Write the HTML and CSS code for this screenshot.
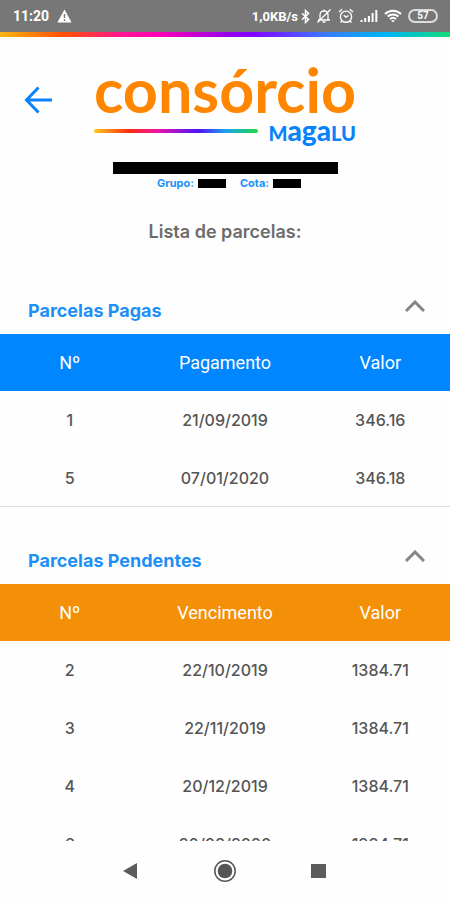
FILE: index.html
```
<!DOCTYPE html>
<html lang="pt-br">

<head>
    <title>Consórcio Magalu</title>
    <meta charset="utf-8" />
    <meta name="viewport" content="width=device-width, initial-scale=1" />
    <link rel="stylesheet" href="styles.css">
</head>
<body>

    <div id="statusBar">
        <span>11:20</span>
        <svg class="warnIcon" width="15" height="14" viewBox="0 0 15 14">
            <path d="M7.5 0.5L14.6 13.5H0.4Z" fill="#fff" />
            <path d="M7.5 5V9M7.5 10.3V12" stroke="#777" stroke-width="1.5" />
        </svg>
        <span class="netSpeed">1,0KB/s</span>
        <svg width="9" height="15" viewBox="0 0 9 15" fill="none" stroke="#fff" stroke-width="1.5">
            <path d="M1 4.2L7.6 10.6L4.5 13.5V1.5L7.6 4.4L1 10.8" />
        </svg>
        <svg class="statusIcon" width="16" height="16" viewBox="0 0 16 16" fill="none" stroke="#fff" stroke-width="1.3">
            <path d="M2 12H14M4 11.5V7C4 4.5 5.6 3 8 3S12 4.5 12 7V11.5M6.5 14H9.5M8 3V1.5M1.5 14.5L14.5 1.5" />
        </svg>
        <svg class="statusIcon" width="16" height="16" viewBox="0 0 16 16" fill="none" stroke="#fff" stroke-width="1.4">
            <circle cx="8" cy="8.7" r="5.6" />
            <path d="M5.8 7.2L8 9.2L10.5 7.5M1 4L4.2 1.3M15 4L11.8 1.3M3.8 13L2.6 14.6M12.2 13L13.4 14.6" />
        </svg>
        <svg class="statusIcon" width="18" height="14" viewBox="0 0 18 14" fill="none" stroke="#fff" stroke-width="2">
            <path d="M1.5 13V11M5.2 13V9M8.9 13V7M12.6 13V4M16.3 13V1" />
        </svg>
        <svg class="statusIcon" width="18" height="14" viewBox="0 0 18 14" fill="none" stroke="#fff" stroke-width="2">
            <path d="M1 5C5.5 0.6 12.5 0.6 17 5M3.6 7.6C6.7 4.8 11.3 4.8 14.4 7.6M6 10C7.8 8.5 10.2 8.5 12 10" />
            <path d="M7 11.3H11L9 13.6Z" fill="#fff" stroke="none" />
        </svg>
        <span class="battery">57</span>
    </div>
    <div id="rainbowBar"></div>

    <div id="contents">

        <div id="topMenu">
            <button type="button" class="backBtn" aria-label="Voltar">
                <svg width="28" height="28" viewBox="0 0 28 28" fill="none" stroke="#0a82fa" stroke-width="3">
                    <path d="M28 14H3M14.5 1.5L2.5 14L14.5 26.5" />
                </svg>
            </button>
            <div id="topLogo">
                <div class="logoName">consórcio</div>
                <div class="logoBrand">
                    <span class="logoLine"></span>
                    <span class="logoMagalu"><small>M</small>aga<small>LU</small></span>
                </div>
            </div>
        </div>

        <!-- dados do cliente -->
        <div id="clientInfo">
            <div class="maskName"></div>
            <div class="quota">
                <span>Grupo:</span><span class="mask"></span>
                <span class="quotaLabel">Cota:</span><span class="mask"></span>
            </div>
        </div>

        <h1>Lista de parcelas:</h1>

        <div class="panel">
            <button type="button" class="panelTitle" aria-expanded="true">
                Parcelas Pagas
                <svg width="20" height="12" viewBox="0 0 20 12" fill="none" stroke="#858585" stroke-width="3">
                    <path d="M1 11L10 2L19 11" />
                </svg>
            </button>
            <table class="paid">
                <thead>
                    <tr><th>Nº</th><th class="dateCol">Pagamento</th><th>Valor</th></tr>
                </thead>
                <tbody>
                    <tr><td>1</td><td>21/09/2019</td><td>346.16</td></tr>
                    <tr><td>5</td><td>07/01/2020</td><td>346.18</td></tr>
                </tbody>
            </table>
        </div>

        <div class="panel">
            <button type="button" class="panelTitle" aria-expanded="true">
                Parcelas Pendentes
                <svg width="20" height="12" viewBox="0 0 20 12" fill="none" stroke="#858585" stroke-width="3">
                    <path d="M1 11L10 2L19 11" />
                </svg>
            </button>
            <table class="pending">
                <thead>
                    <tr><th>Nº</th><th class="dateCol">Vencimento</th><th>Valor</th></tr>
                </thead>
                <tbody>
                    <tr><td>2</td><td>22/10/2019</td><td>1384.71</td></tr>
                    <tr><td>3</td><td>22/11/2019</td><td>1384.71</td></tr>
                    <tr><td>4</td><td>20/12/2019</td><td>1384.71</td></tr>
                    <tr><td>6</td><td>20/02/2020</td><td>1384.71</td></tr>
                </tbody>
            </table>
        </div>

    </div>

    <div id="navBar">
        <button type="button" aria-label="Voltar">
            <svg width="24" height="24" viewBox="0 0 24 24"><path d="M4 12L18 4V20Z" fill="#5c5c5c" /></svg>
        </button>
        <button type="button" aria-label="Início">
            <svg width="24" height="24" viewBox="0 0 24 24">
                <circle cx="12" cy="12" r="10.2" fill="none" stroke="#555" stroke-width="1.5" />
                <circle cx="12" cy="12" r="7.3" fill="#555" />
            </svg>
        </button>
        <button type="button" aria-label="Recentes">
            <svg width="24" height="24" viewBox="0 0 24 24"><path d="M4 5H19V19H4Z" fill="#5c5c5c" /></svg>
        </button>
    </div>

</body>
</html>
```
FILE: styles.css
```
* {
    box-sizing: border-box;
}

body {
    display: flex;
    flex-direction: column;
    height: 100vh;
    margin: 0;
    background-color: #FEFEFE;
    font-family: Inter, "Liberation Sans", sans-serif;
    font-size: 16px;
    color: #555;
    overflow: hidden;
}

button {
    border: none;
    background: none;
    padding: 0;
    font-family: inherit;
    cursor: pointer;
}

svg {
    display: block;
    flex: none;
}

#statusBar {
    display: flex;
    flex: none;
    align-items: center;
    height: 32px;
    padding: 0 12px 0 13px;
    background-color: #777;
    color: #FFF;
    font-family: Roboto, sans-serif;
    font-size: 14px;
    font-weight: 700;
}

.warnIcon {
    margin-left: 8px;
}

.netSpeed {
    margin-left: auto;
    margin-right: 3px;
    font-size: 13px;
}

.statusIcon {
    margin-left: 6px;
}

.battery {
    width: 30px;
    height: 14px;
    margin-left: 6px;
    border: 2px solid #DDD;
    border-radius: 7px;
    font-size: 10px;
    line-height: 10px;
    text-align: center;
}

#rainbowBar {
    flex: none;
    height: 5px;
    background: linear-gradient(to right, #fdb515 0%, #ff5000 14%, #ff1493 27%, #ff00b4 35%, #9b00e6 50%, #8200ff 56%, #3c78ff 72%, #00b4ff 85%, #10dc78 100%);
}

#contents {
    flex: 1;
    min-height: 0;
    overflow: hidden;
}

#topMenu {
    display: grid;
    grid-template-columns: 1fr auto 1fr;
    padding: 26px 24px 0;
}

.backBtn {
    width: 28px;
    height: 28px;
    margin-top: 23px;
}

.logoName {
    font-family: Lato, sans-serif;
    font-size: 61px;
    font-weight: 700;
    line-height: 54px;
    color: #ff8600;
}

.logoBrand {
    display: flex;
    align-items: center;
    justify-content: space-between;
    height: 28px;
}

.logoLine {
    flex: 1;
    height: 4px;
    margin-right: 10px;
    border-radius: 2px;
    background: linear-gradient(to right, #ffc81e, #ff2814 22%, #f014a0 38%, #7d14e6 55%, #4b14f0 64%, #1ea0f0 80%, #1edc46);
}

.logoMagalu {
    font-family: Lato, sans-serif;
    font-size: 28px;
    font-weight: 900;
    line-height: 28px;
    color: #0a82fa;
}

.logoMagalu small {
    font-size: 20px;
}

#clientInfo {
    display: flex;
    flex-direction: column;
    align-items: center;
    padding-top: 17px;
}

.maskName {
    width: 50%;
    height: 12px;
    background-color: #000;
}

.quota {
    display: flex;
    align-items: center;
    margin-top: 2px;
    padding-left: 8px;
    font-size: 11px;
    font-weight: 700;
    line-height: 14px;
    color: #2090f5;
}

.mask {
    width: 28px;
    height: 9px;
    margin-left: 4px;
    background-color: #000;
}

.quotaLabel {
    margin-left: 14px;
}

h1 {
    margin: 31px 0 0;
    font-size: 18px;
    font-weight: 600;
    line-height: 22px;
    text-align: center;
    color: #6c6c6c;
}

.panelTitle {
    display: flex;
    align-items: center;
    justify-content: space-between;
    width: 100%;
    height: 77px;
    padding: 30px 25px 0 28px;
    font-size: 18px;
    font-weight: 700;
    color: #1e90f5;
}

.panelTitle svg {
    margin-bottom: 10px;
}

h1 + .panel {
    margin-top: 14px;
}

table {
    width: 100%;
    table-layout: fixed;
    border-collapse: separate;
    border-spacing: 0;
    text-align: center;
}

th {
    height: 57px;
    padding: 0;
    font-family: Roboto, sans-serif;
    font-size: 18px;
    font-weight: 400;
    color: #FFF;
}

.dateCol {
    width: 38%;
}

td {
    height: 58px;
    padding: 0;
    font-weight: 500;
}

tbody tr:last-child td {
    border-bottom: 1px solid #DDD;
}

.paid th {
    background-color: #0086ff;
}

.pending th {
    background-color: #f39008;
}

#navBar {
    display: flex;
    flex: none;
    align-items: center;
    justify-content: center;
    gap: 70px;
    height: 59px;
    background-color: #FEFEFE;
}
```
